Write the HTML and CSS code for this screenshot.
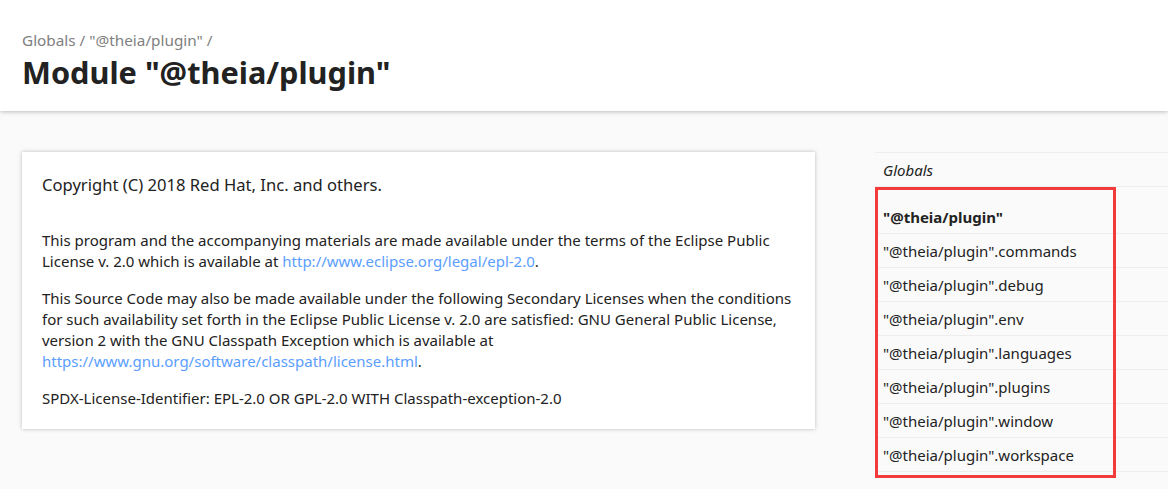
FILE: index.html
```html
<!DOCTYPE html>
<html>
<head>
<meta charset="utf-8">
<link rel="stylesheet" href="styles.css">
</head>
<body>
<header class="page-title">
  <div class="crumbs"><a class="crumb">Globals</a> / <a class="crumb">"@theia/plugin"</a> /</div>
  <h1 class="title">Module "@theia/plugin"</h1>
</header>
<div class="content">
  <main class="panel">
    <p class="lead">Copyright (C) 2018 Red Hat, Inc. and others.</p>
    <p>This program and the accompanying materials are made available under the terms of the Eclipse Public License v. 2.0 which is available at <a class="link">http://www.eclipse.org/legal/epl-2.0</a>.</p>
    <p>This Source Code may also be made available under the following Secondary Licenses when the conditions for such availability set forth in the Eclipse Public License v. 2.0 are satisfied: GNU General Public License, version 2 with the GNU Classpath Exception which is available at <a class="link">https://www.gnu.org/software/classpath/license.html</a>.</p>
    <p class="last">SPDX-License-Identifier: EPL-2.0 OR GPL-2.0 WITH Classpath-exception-2.0</p>
  </main>
  <nav class="nav">
    <div class="nav-item globals">Globals</div>
    <ul class="nav-list">
      <li class="nav-item current">"@theia/plugin"</li>
      <li class="nav-item">"@theia/plugin".commands</li>
      <li class="nav-item">"@theia/plugin".debug</li>
      <li class="nav-item">"@theia/plugin".env</li>
      <li class="nav-item">"@theia/plugin".languages</li>
      <li class="nav-item">"@theia/plugin".plugins</li>
      <li class="nav-item">"@theia/plugin".window</li>
      <li class="nav-item">"@theia/plugin".workspace</li>
    </ul>
    <div class="highlight"></div>
  </nav>
</div>
</body>
</html>
```

FILE: styles.css
```css
html, body {
  margin: 0;
  padding: 0;
}
body {
  background: #fafafa;
  color: #222;
  font-family: "Noto Sans", "Open Sans", sans-serif;
  font-size: 15px;
  overflow: hidden;
  height: 489px;
}
.page-title {
  background: #fff;
  height: 111px;
  box-sizing: border-box;
  padding: 29px 22px 0;
  box-shadow: 0 0 5px rgba(0,0,0,0.35);
  position: relative;
  z-index: 1;
}
.crumbs {
  color: #808080;
  font-size: 15.3px;
  line-height: 22px;
}
.crumb {
  color: #808080;
}
.title {
  margin: 0;
  font-size: 30.7px;
  line-height: 42px;
  font-weight: 700;
  color: #222;
}
.content {
  display: flex;
  padding: 41px 0 0 22px;
}
.panel {
  width: 793px;
  flex: none;
  box-sizing: border-box;
  background: #fff;
  padding: 20px 14px 20px 20px;
  box-shadow: 0 0 4px rgba(0,0,0,0.25);
  align-self: flex-start;
}
.panel p {
  margin: 0 0 16px;
  line-height: 21px;
}
.panel p.lead {
  font-size: 16.6px;
  line-height: 26px;
  margin-bottom: 32px;
}
.panel p.last {
  margin-bottom: 0;
}
.link {
  color: #5a9eff;
}
.nav {
  margin-left: 60px;
  flex: 1;
  position: relative;
  border-top: 1px solid #eee;
}
.nav-item {
  height: 31px;
  line-height: 31px;
  padding: 2px 0 0 8px;
  border-bottom: 1px solid #eee;
  font-size: 15px;
  white-space: nowrap;
}
.globals {
  font-style: italic;
  color: #222;
}
.nav-list {
  list-style: none;
  margin: 0;
  padding: 13px 0 0;
}
.current {
  font-weight: 700;
}
.highlight {
  position: absolute;
  left: 0;
  top: 34px;
  width: 235px;
  height: 285px;
  border: 3px solid #f33b3b;
}
```
